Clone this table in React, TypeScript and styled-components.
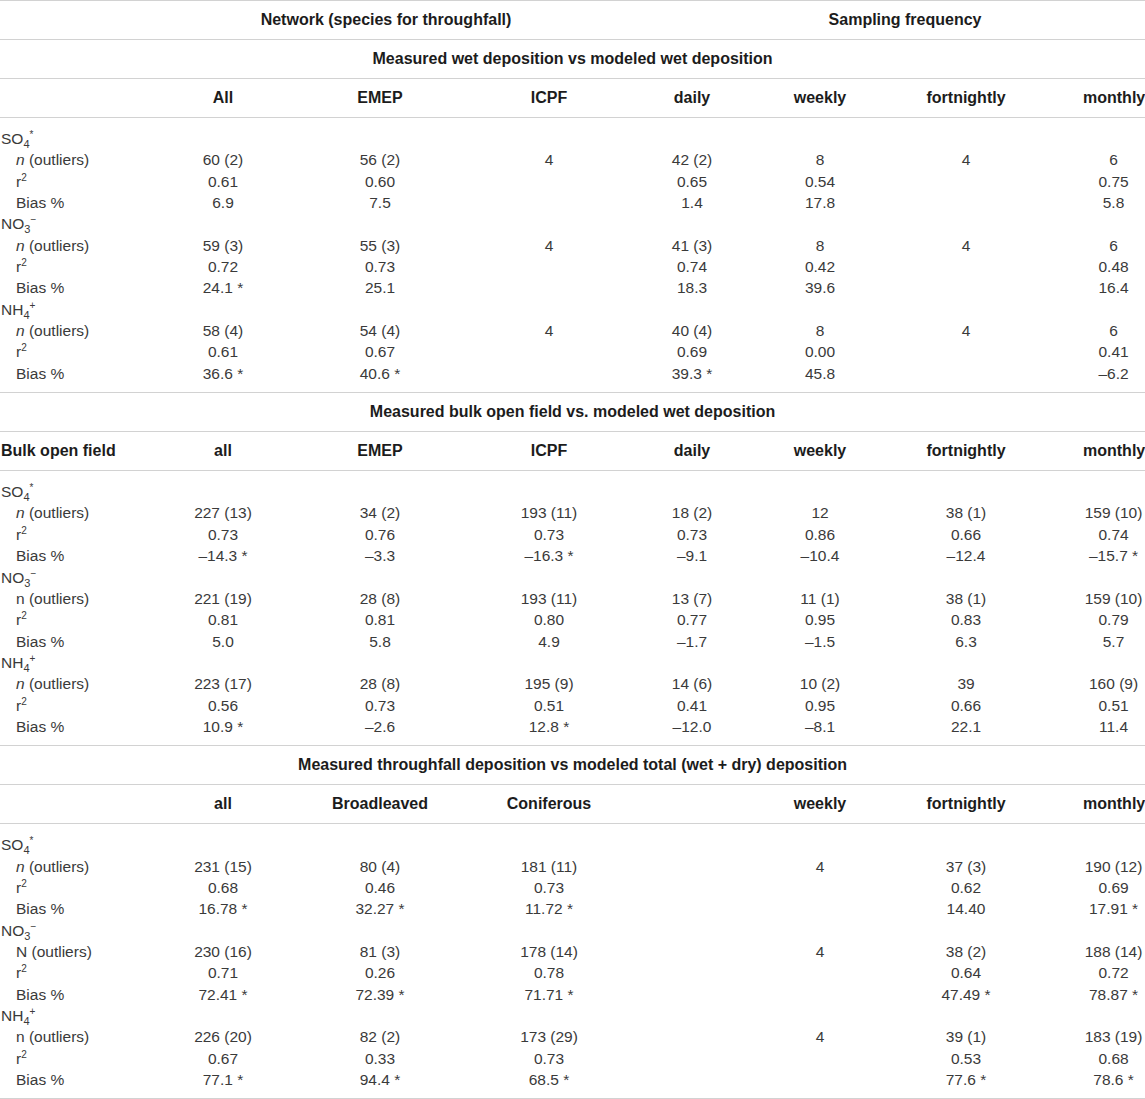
import React from "react";
import styled, { createGlobalStyle } from "styled-components";

const GlobalStyle = createGlobalStyle`
  html, body {
    margin: 0;
    padding: 0;
    background: #fff;
  }
  body {
    font-family: "Liberation Sans", Arial, sans-serif;
    overflow: hidden;
  }
`;

const Table = styled.table`
  width: 1145px;
  table-layout: fixed;
  border-collapse: separate;
  border-spacing: 0;
  border-top: 1px solid #d2d2d2;
  font-size: 15.5px;
  color: #3a3a3a;
`;

const HeadCell = styled.th<{ $padL?: number; $padR?: number; $left?: boolean }>`
  font-size: 16px;
  font-weight: 700;
  color: #1c1c1c;
  line-height: 18px;
  padding: 10px ${(p) => p.$padR ?? 0}px 10px ${(p) => p.$padL ?? 0}px;
  text-align: ${(p) => (p.$left ? "left" : "center")};
  border-bottom: 1px solid #d2d2d2;
  white-space: nowrap;
`;

const ColHeadRow = styled.tr`
  th:last-child {
    padding-left: 41px;
  }
`;

const DataRow = styled.tr<{ $first?: boolean; $last?: boolean }>`
  td {
    line-height: 21.35px;
    padding-top: ${(p) => (p.$first ? 10 : 0)}px;
    padding-bottom: ${(p) => (p.$last ? 8 : 0)}px;
    border-bottom: ${(p) => (p.$last ? "1px solid #d2d2d2" : "none")};
    text-align: center;
    white-space: nowrap;
  }
  td:last-child {
    padding-left: 41px;
  }
`;

const Label = styled.td<{ $indent?: boolean }>`
  && {
    text-align: left;
    padding-left: ${(p) => (p.$indent ? 16 : 1)}px;
  }
`;

const Sub = styled.sub`
  font-size: 11px;
  line-height: 0;
  vertical-align: -4px;
`;

const Sup = styled.sup`
  font-size: 10px;
  line-height: 0;
  vertical-align: 6px;
`;

type Metric = { label: React.ReactNode; values: string[] };
type Group = { name: React.ReactNode; metrics: Metric[] };
type Section = { title: string; label: string; columns: string[]; groups: Group[] };

const nItalic = (
  <>
    <i>n</i> (outliers)
  </>
);
const nPlain = "n (outliers)";
const r2 = (
  <>
    r<Sup>2</Sup>
  </>
);

const SO4 = (
  <>
    SO<Sub>4</Sub>
    <Sup>*</Sup>
  </>
);
const NO3 = (
  <>
    NO<Sub>3</Sub>
    <Sup>−</Sup>
  </>
);
const NH4 = (
  <>
    NH<Sub>4</Sub>
    <Sup>+</Sup>
  </>
);

const sections: Section[] = [
  {
    title: "Measured wet deposition vs modeled wet deposition",
    label: "",
    columns: ["All", "EMEP", "ICPF", "daily", "weekly", "fortnightly", "monthly"],
    groups: [
      {
        name: SO4,
        metrics: [
          { label: nItalic, values: ["60 (2)", "56 (2)", "4", "42 (2)", "8", "4", "6"] },
          { label: r2, values: ["0.61", "0.60", "", "0.65", "0.54", "", "0.75"] },
          { label: "Bias %", values: ["6.9", "7.5", "", "1.4", "17.8", "", "5.8"] },
        ],
      },
      {
        name: NO3,
        metrics: [
          { label: nItalic, values: ["59 (3)", "55 (3)", "4", "41 (3)", "8", "4", "6"] },
          { label: r2, values: ["0.72", "0.73", "", "0.74", "0.42", "", "0.48"] },
          { label: "Bias %", values: ["24.1 *", "25.1", "", "18.3", "39.6", "", "16.4"] },
        ],
      },
      {
        name: NH4,
        metrics: [
          { label: nItalic, values: ["58 (4)", "54 (4)", "4", "40 (4)", "8", "4", "6"] },
          { label: r2, values: ["0.61", "0.67", "", "0.69", "0.00", "", "0.41"] },
          { label: "Bias %", values: ["36.6 *", "40.6 *", "", "39.3 *", "45.8", "", "–6.2"] },
        ],
      },
    ],
  },
  {
    title: "Measured bulk open field vs. modeled wet deposition",
    label: "Bulk open field",
    columns: ["all", "EMEP", "ICPF", "daily", "weekly", "fortnightly", "monthly"],
    groups: [
      {
        name: SO4,
        metrics: [
          { label: nItalic, values: ["227 (13)", "34 (2)", "193 (11)", "18 (2)", "12", "38 (1)", "159 (10)"] },
          { label: r2, values: ["0.73", "0.76", "0.73", "0.73", "0.86", "0.66", "0.74"] },
          { label: "Bias %", values: ["–14.3 *", "–3.3", "–16.3 *", "–9.1", "–10.4", "–12.4", "–15.7 *"] },
        ],
      },
      {
        name: NO3,
        metrics: [
          { label: nPlain, values: ["221 (19)", "28 (8)", "193 (11)", "13 (7)", "11 (1)", "38 (1)", "159 (10)"] },
          { label: r2, values: ["0.81", "0.81", "0.80", "0.77", "0.95", "0.83", "0.79"] },
          { label: "Bias %", values: ["5.0", "5.8", "4.9", "–1.7", "–1.5", "6.3", "5.7"] },
        ],
      },
      {
        name: NH4,
        metrics: [
          { label: nItalic, values: ["223 (17)", "28 (8)", "195 (9)", "14 (6)", "10 (2)", "39", "160 (9)"] },
          { label: r2, values: ["0.56", "0.73", "0.51", "0.41", "0.95", "0.66", "0.51"] },
          { label: "Bias %", values: ["10.9 *", "–2.6", "12.8 *", "–12.0", "–8.1", "22.1", "11.4"] },
        ],
      },
    ],
  },
  {
    title: "Measured throughfall deposition vs modeled total (wet + dry) deposition",
    label: "",
    columns: ["all", "Broadleaved", "Coniferous", "", "weekly", "fortnightly", "monthly"],
    groups: [
      {
        name: SO4,
        metrics: [
          { label: nItalic, values: ["231 (15)", "80 (4)", "181 (11)", "", "4", "37 (3)", "190 (12)"] },
          { label: r2, values: ["0.68", "0.46", "0.73", "", "", "0.62", "0.69"] },
          { label: "Bias %", values: ["16.78 *", "32.27 *", "11.72 *", "", "", "14.40", "17.91 *"] },
        ],
      },
      {
        name: NO3,
        metrics: [
          { label: "N (outliers)", values: ["230 (16)", "81 (3)", "178 (14)", "", "4", "38 (2)", "188 (14)"] },
          { label: r2, values: ["0.71", "0.26", "0.78", "", "", "0.64", "0.72"] },
          { label: "Bias %", values: ["72.41 *", "72.39 *", "71.71 *", "", "", "47.49 *", "78.87 *"] },
        ],
      },
      {
        name: NH4,
        metrics: [
          { label: nPlain, values: ["226 (20)", "82 (2)", "173 (29)", "", "4", "39 (1)", "183 (19)"] },
          { label: r2, values: ["0.67", "0.33", "0.73", "", "", "0.53", "0.68"] },
          { label: "Bias %", values: ["77.1 *", "94.4 *", "68.5 *", "", "", "77.6 *", "78.6 *"] },
        ],
      },
    ],
  },
];

const colWidths = [150, 146, 168, 170, 116, 140, 152, 103];

const SectionRows = ({ section }: { section: Section }) => {
  const rows: { label: React.ReactNode; indent: boolean; values: string[] }[] = [];
  section.groups.forEach((g) => {
    rows.push({ label: g.name, indent: false, values: Array(7).fill("") });
    g.metrics.forEach((m) => rows.push({ label: m.label, indent: true, values: m.values }));
  });
  return (
    <>
      <tr>
        <HeadCell colSpan={8}>{section.title}</HeadCell>
      </tr>
      <ColHeadRow>
        <HeadCell $left $padL={1}>
          {section.label}
        </HeadCell>
        {section.columns.map((c, i) => (
          <HeadCell key={i}>{c}</HeadCell>
        ))}
      </ColHeadRow>
      {rows.map((r, i) => (
        <DataRow key={i} $first={i === 0} $last={i === rows.length - 1}>
          <Label $indent={r.indent}>{r.label}</Label>
          {r.values.map((v, j) => (
            <td key={j}>{v}</td>
          ))}
        </DataRow>
      ))}
    </>
  );
};

export default function App() {
  return (
    <>
      <GlobalStyle />
      <Table>
        <colgroup>
          {colWidths.map((w, i) => (
            <col key={i} style={{ width: w }} />
          ))}
        </colgroup>
        <tbody>
          <tr>
            <HeadCell />
            <HeadCell colSpan={3} $padR={12}>
              Network (species for throughfall)
            </HeadCell>
            <HeadCell colSpan={4} $padL={31}>
              Sampling frequency
            </HeadCell>
          </tr>
          {sections.map((s, i) => (
            <SectionRows key={i} section={s} />
          ))}
        </tbody>
      </Table>
    </>
  );
}
